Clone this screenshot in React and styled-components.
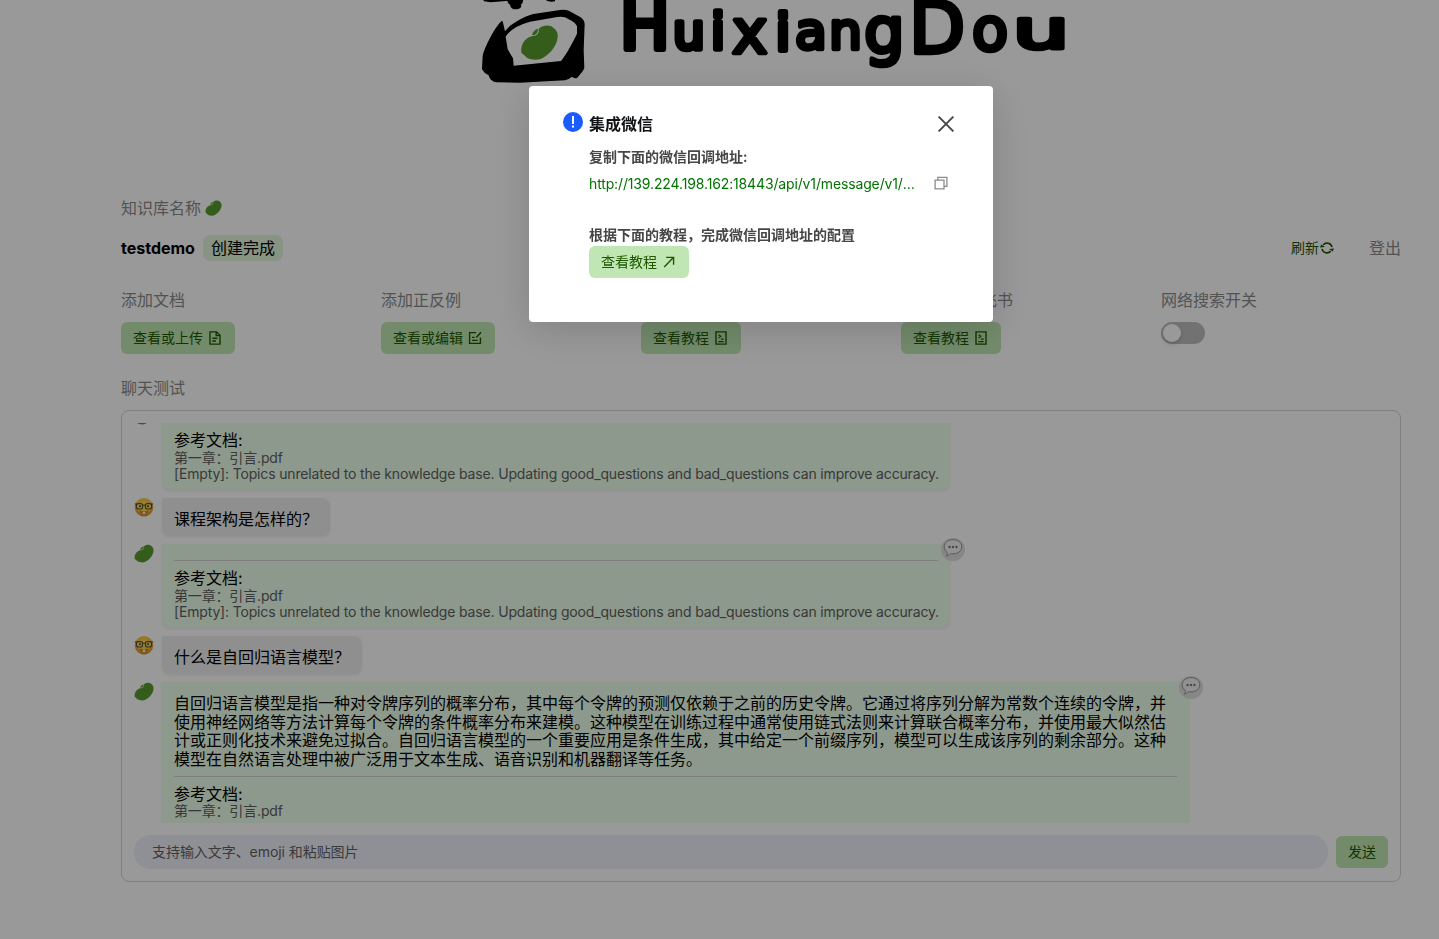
import React from 'react';
import styled, { createGlobalStyle, css } from 'styled-components';

const GlobalStyle = createGlobalStyle`
  *, *::before, *::after { box-sizing: border-box; }
  html, body { margin: 0; height: 100%; overflow: hidden; background: #fff; }
  body {
    font-family: Inter, "Noto Sans CJK SC", sans-serif;
    font-size: 16px;
    color: #000;
  }
  button, input { font-family: inherit; }
`;

const Page = styled.main`
  width: 1439px;
  height: 939px;
  overflow: hidden;
  padding-left: 121px;
`;

const Content = styled.div`
  width: 1280px;
  display: flex;
  flex-direction: column;
`;

const Banner = styled.header`
  height: 196px;
  padding-left: 349px;
  svg { display: block; overflow: visible; }
`;

const Label = styled.div`
  display: flex;
  align-items: center;
  gap: 4px;
  height: 24px;
  line-height: 24px;
  color: #8b8b8b;
  white-space: nowrap;
`;

const NameRow = styled.div`
  display: flex;
  align-items: center;
  height: 26px;
  margin: 15px 0 27px;
`;

const KbName = styled.strong`
  font-weight: 700;
  line-height: 26px;
  width: 82px;
`;

const Status = styled.span`
  height: 26px;
  line-height: 26px;
  padding: 0 8px;
  border-radius: 8px;
  background: #e1f7da;
`;

const Actions = styled.div`
  margin-left: auto;
  display: flex;
  align-items: center;
  gap: 35px;
`;

const Refresh = styled.span`
  display: flex;
  align-items: center;
  gap: 1px;
  font-size: 14px;
  line-height: 20px;
  color: #1f5800;
`;

const Operations = styled.section`
  display: grid;
  grid-template-columns: repeat(5, 240px);
  column-gap: 20px;
  height: 66px;
  margin-bottom: 22px;
`;

const Operation = styled.div`
  display: flex;
  flex-direction: column;
  align-items: flex-start;
  gap: 10px;
`;

const Button = styled.button`
  display: inline-flex;
  align-items: center;
  gap: 5px;
  flex: none;
  height: 32px;
  padding: 0 12px;
  border: 0;
  border-radius: 6px;
  background: #c0e7b3;
  color: #1f5800;
  font-size: 14px;
  line-height: 32px;
  white-space: nowrap;
  svg { flex: none; margin-right: 1px; }
`;

const SwitchTrack = styled.span`
  width: 44px;
  height: 22px;
  padding: 2px;
  border-radius: 11px;
  background: #bfbfbf;
`;

const SwitchThumb = styled.span`
  display: block;
  width: 18px;
  height: 18px;
  border-radius: 50%;
  background: #fff;
  box-shadow: 0 2px 4px rgba(0, 35, 11, 0.2);
`;

const ChatPanel = styled.section`
  display: flex;
  flex-direction: column;
  gap: 12px;
  height: 472px;
  margin-top: 10px;
  padding: 12px;
  border: 1px solid #d5d5d8;
  border-radius: 8px;
`;

const Messages = styled.div`
  height: 400px;
  overflow: hidden;
`;

const Thread = styled.div`
  display: flex;
  flex-direction: column;
  gap: 8px;
  margin-top: -17px;
`;

const Message = styled.div`
  display: flex;
  align-items: flex-start;
  gap: 8px;
  > svg { flex: none; }
`;

const Bubble = styled.div`
  position: relative;
  border-radius: 0 8px 8px 8px;
  box-shadow: 0 1px 3px rgba(0, 0, 0, 0.08);
  ${({ $user, $wide }) => $user ? css`
    height: 38px;
    padding: 12px 12px 8px;
    line-height: 18px;
    background: #efefef;
  ` : css`
    width: ${$wide ? 1027 : 788}px;
    min-height: 84px;
    padding: 8px 12px;
    background: #ebffe9;
  `}
`;

const Answer = styled.p`
  margin: 0;
  padding: 4px 0 0;
  line-height: 18.5px;
`;

const Divider = styled.div`
  height: 1px;
  margin: 8px 0;
  background: #d2d2d2;
`;

const RefTitle = styled.div`
  line-height: ${({ $wide }) => ($wide ? 18.4 : 18.5)}px;
`;

const RefItem = styled.div`
  font-size: 14px;
  line-height: 16px;
  letter-spacing: -0.162px;
  color: #606060;
  white-space: nowrap;
`;

const Feedback = styled.span`
  position: absolute;
  top: -6px;
  right: ${({ $wide }) => ($wide ? -14 : -15)}px;
  width: 24px;
  height: 23px;
  border-radius: 50%;
  background: #dfdfdf;
  svg { display: block; }
`;

const Composer = styled.div`
  display: flex;
  align-items: center;
  gap: 8px;
`;

const Input = styled.input`
  flex: 1;
  height: 34px;
  padding: 0 18px 2px;
  border: 0;
  border-radius: 16px;
  background: #eff1f8;
  font-size: 14px;
  letter-spacing: -0.06px;
  &::placeholder { color: #626262; opacity: 1; }
`;

const Mask = styled.div`
  position: fixed;
  inset: 0;
  padding: 86px 0 0 529px;
  background: rgba(0, 0, 0, 0.4);
`;

const Modal = styled.div`
  display: flex;
  align-items: flex-start;
  gap: 6px;
  width: 464px;
  height: 236px;
  padding: 26px 34px;
  border-radius: 4px;
  background: #fff;
  box-shadow: 0 8px 40px rgba(0, 0, 0, 0.16);
  > svg { flex: none; }
`;

const ModalBody = styled.div`
  flex: 1;
  min-width: 0;
`;

const ModalHead = styled.div`
  display: flex;
  align-items: center;
  justify-content: space-between;
  height: 24px;
  padding-right: 5px;
  font-weight: 600;
  color: #121316;
  line-height: 24px;
  span { height: 24px; }
`;

const ModalText = styled.div`
  margin-top: ${({ $top = 0 }) => $top}px;
  font-size: 14px;
  font-weight: 600;
  line-height: 22px;
  color: #464646;
`;

const UrlRow = styled.div`
  display: flex;
  align-items: center;
  gap: 18px;
  height: 22px;
  margin: 4px 0 30px;
  font-size: 14px;
`;

const Url = styled.span`
  width: 327px;
  overflow: hidden;
  white-space: nowrap;
  text-overflow: ellipsis;
  letter-spacing: -0.14px;
  color: #007400;
`;

const Icon = ({ size = 14, children, w = 1.4, ...rest }) => (
  <svg width={size} height={size} viewBox="0 0 14 14" fill="none" stroke="currentColor" strokeWidth={w} {...rest}>
    {children}
  </svg>
);

const FileIcon = () => (
  <Icon>
    <path d="M2 .9H8.6L12 4.2V13.1H2Z" />
    <path d="M8.2 .8V4.6H12M4.3 7.2H9.5M4.3 10H8" />
  </Icon>
);
const EditIcon = () => (
  <Icon>
    <path d="M8 1.6H1.6V12.4H12.4V6.5M4 6.4H6.6M4 9.4H9.6M8.3 6.5L13 1.2" />
  </Icon>
);
const GuideIcon = () => (
  <Icon>
    <path d="M2 .9H12V13.1H2Z" />
    <path d="M4.3 10.6H9.7M6.9 8.1H9.7M4.6 3.7L6.8 5.3L4.6 7" strokeWidth="1.2" />
  </Icon>
);
const ArrowIcon = () => (
  <Icon>
    <path d="M2.2 12L11.4 2.6M4.2 2.4H11.6V9.8" />
  </Icon>
);
const RefreshIcon = () => (
  <Icon w={1.6}>
    <path d="M3.2 3.9A5.1 5.1 0 0 1 12 6.2M10.8 10.1A5.1 5.1 0 0 1 2 7.8" />
    <path d="M0 6.4L1.2 3.4L4.9 5.9ZM14 7.6L12.8 10.6L9.1 8.1Z" fill="currentColor" stroke="none" />
  </Icon>
);
const CopyIcon = () => (
  <Icon stroke="#8b8b8b" w={1.3}>
    <path d="M1.1 4.1H10V12.9H1.1ZM3.8 4V1.3H12.9V10.4H10" />
  </Icon>
);
const CloseIcon = () => (
  <svg width="16" height="16" viewBox="0 0 16 16" fill="none" stroke="#464646" strokeWidth="1.9">
    <path d="M.6 .6L15.4 15.4M15.4 .6L.6 15.4" />
  </svg>
);
const InfoIcon = () => (
  <svg width="20" height="20" viewBox="0 0 20 20">
    <circle cx="10" cy="10" r="10" fill="#1b5cff" />
    <path d="M9 4H11V12H9ZM9 13.5H11V15.5H9Z" fill="#fff" />
  </svg>
);

const BeanShape = () => (
  <g fill="#589b2f">
    <path d="M154 158C151 130 168 112 188 108C201 107 208 99 206 86C220 74 240 73 250 83C261 91 264 100 263 112C261 138 240 162 218 174C207 181 185 180 172 174Z" />
    <path d="M186 105C188 95 195 88 204 86C204 97 200 106 186 105Z" />
  </g>
);
const Bean = ({ size = 20 }) => (
  <svg width={size} height={size} viewBox="150 74 116 112">
    <BeanShape />
  </svg>
);

const NerdFace = () => (
  <svg width="20" height="20" viewBox="0 0 20 20">
    <defs>
      <radialGradient id="face" cx=".5" cy=".4" r=".6">
        <stop offset="0" stopColor="#ffe45c" />
        <stop offset=".65" stopColor="#f8c440" />
        <stop offset="1" stopColor="#d57b16" />
      </radialGradient>
    </defs>
    <circle cx="10" cy="9.3" r="9.2" fill="url(#face)" />
    <path d="M5.4 12.8Q10 13.8 14.6 12.8Q13.6 16.2 10 16.2Q6.4 16.2 5.4 12.8Z" fill="#c07a26" />
    <path d="M8.6 13.6H11.4V15.8H8.6Z" fill="#fff" />
    <g fill="#edd46a" stroke="#5a4f2c" strokeWidth="1.1">
      <rect x="2.4" y="5.6" width="6.2" height="5.4" rx="2" />
      <rect x="11.4" y="5.6" width="6.2" height="5.4" rx="2" />
      <path d="M.8 6H3M17 6H19.2M8.6 7.4Q10 6.6 11.4 7.4" fill="none" />
    </g>
    <circle cx="6" cy="8.2" r="1" fill="#5b3f18" />
    <circle cx="14" cy="8.2" r="1" fill="#5b3f18" />
  </svg>
);

const SpeechIcon = () => (
  <svg width="24" height="23" viewBox="0 0 24 23">
    <path d="M12 1.6C17 1.6 20.8 4.6 20.8 8.7S17 15.9 12 15.9C11 15.9 10.2 15.8 9.4 15.6C8.3 17 7 17.8 5.2 18.1C6.2 17 6.6 15.8 6.3 14.5C4.3 13.2 3.2 11.2 3.2 8.7C3.2 4.6 7 1.6 12 1.6Z" fill="#f2f2f2" stroke="#959595" strokeWidth="1" />
    <g fill="#7a7a7a">
      <circle cx="8.6" cy="9" r="1.2" />
      <circle cx="12" cy="9" r="1.2" />
      <circle cx="15.4" cy="9" r="1.2" />
    </g>
  </svg>
);

const Logo = () => (
  <svg width="610" height="90" viewBox="0 0 610 90">
    <g transform="scale(.33333)">
      <path fillRule="evenodd" d="M95 63C75 80 42 145 38 168L36 208Q42 220 56 226C60 240 68 246 80 247L150 248L285 241Q298 237 306 230Q316 238 322 233C330 222 340 215 343 203L341 150L344 72Q343 60 332 52L296 32Q286 28 270 30L190 42C160 50 120 72 105 94L98 64ZM107 110L113 148L129 175L131 197L273 183C285 170 310 125 321 101V78Q318 70 306 63L285 52Q275 49 262 51L180 65Q125 80 107 110Z" />
      <path d="M38 -4H118V0L108 3L62 7L42 4ZM110 -4H160Q160 8 153 14Q157 26 138 28Q122 28 120 14Q110 8 112 -4ZM222 -4H255V4Q244 7 232 3Z" />
      <BeanShape />
    </g>
    <text
      fontFamily="DejaVu Sans, sans-serif"
      fontSize="50"
      y="49"
      stroke="#000"
      strokeWidth="4.5"
      strokeLinejoin="round"
    >
      <tspan x="150" fontSize="66" strokeWidth="6">H</tspan>
      <tspan x="203 241" strokeWidth="5.5">ui</tspan>
      <tspan x="262" y="53" fontSize="60">x</tspan>
      <tspan x="306" y="50" fontSize="50" strokeWidth="6">i</tspan>
      <tspan x="325 359" y="49" fontSize="52">an</tspan>
      <tspan x="394" y="53" fontSize="64">g</tspan>
      <tspan x="439" y="53" fontSize="73">D</tspan>
      <tspan x="502" y="50" fontSize="59">o</tspan>
      <tspan x="543" y="48" fontSize="54" textLength="56" lengthAdjust="spacingAndGlyphs">u</tspan>
    </text>
  </svg>
);

const operations = [
  ['添加文档', '查看或上传', FileIcon],
  ['添加正反例', '查看或编辑', EditIcon],
  ['零开发集成微信', '查看教程', GuideIcon],
  ['零开发集成飞书', '查看教程', GuideIcon],
];

const emptyNote = '[Empty]: Topics unrelated to the knowledge base. Updating good_questions and bad_questions can improve accuracy.';

const thread = [
  { refs: ['第一章：引言.pdf', emptyNote] },
  { question: '课程架构是怎样的？' },
  { refs: ['第一章：引言.pdf', emptyNote] },
  { question: '什么是自回归语言模型？' },
  {
    answer: '自回归语言模型是指一种对令牌序列的概率分布，其中每个令牌的预测仅依赖于之前的历史令牌。它通过将序列分解为常数个连续的令牌，并使用神经网络等方法计算每个令牌的条件概率分布来建模。这种模型在训练过程中通常使用链式法则来计算联合概率分布，并使用最大似然估计或正则化技术来避免过拟合。自回归语言模型的一个重要应用是条件生成，其中给定一个前缀序列，模型可以生成该序列的剩余部分。这种模型在自然语言处理中被广泛用于文本生成、语音识别和机器翻译等任务。',
    refs: ['第一章：引言.pdf'],
  },
];

const ChatMessage = ({ question, answer, refs }) => question ? (
  <Message>
    <NerdFace />
    <Bubble $user>{question}</Bubble>
  </Message>
) : (
  <Message>
    <Bean />
    <Bubble $wide={Boolean(answer)}>
      {answer && <Answer>{answer}</Answer>}
      <Divider />
      <RefTitle $wide={Boolean(answer)}>参考文档:</RefTitle>
      {refs.map((r) => <RefItem key={r}>{r}</RefItem>)}
      <Feedback $wide={Boolean(answer)}><SpeechIcon /></Feedback>
    </Bubble>
  </Message>
);

export default function App() {
  return (
    <>
      <GlobalStyle />
      <Page>
        <Content>
          <Banner><Logo /></Banner>
          <Label>知识库名称<Bean size={17} /></Label>
          <NameRow>
            <KbName>testdemo</KbName>
            <Status>创建完成</Status>
            <Actions>
              <Refresh>刷新<RefreshIcon /></Refresh>
              <Label as="span">登出</Label>
            </Actions>
          </NameRow>
          <Operations>
            {operations.map(([title, action, Glyph]) => (
              <Operation key={title}>
                <Label>{title}</Label>
                <Button>{action}<Glyph /></Button>
              </Operation>
            ))}
            <Operation>
              <Label>网络搜索开关</Label>
              <SwitchTrack><SwitchThumb /></SwitchTrack>
            </Operation>
          </Operations>
          <Label>聊天测试</Label>
          <ChatPanel>
            <Messages>
              <Thread>
                {thread.map((m, i) => <ChatMessage key={i} {...m} />)}
              </Thread>
            </Messages>
            <Composer>
              <Input placeholder="支持输入文字、emoji 和粘贴图片" />
              <Button>发送</Button>
            </Composer>
          </ChatPanel>
        </Content>
      </Page>
      <Mask>
        <Modal>
          <InfoIcon />
          <ModalBody>
            <ModalHead><span>集成微信</span><CloseIcon /></ModalHead>
            <ModalText $top={10}>复制下面的微信回调地址:</ModalText>
            <UrlRow>
              <Url>http://139.224.198.162:18443/api/v1/message/v1/wechat/callback</Url>
              <CopyIcon />
            </UrlRow>
            <ModalText>根据下面的教程，完成微信回调地址的配置</ModalText>
            <Button>查看教程<ArrowIcon /></Button>
          </ModalBody>
        </Modal>
      </Mask>
    </>
  );
}
